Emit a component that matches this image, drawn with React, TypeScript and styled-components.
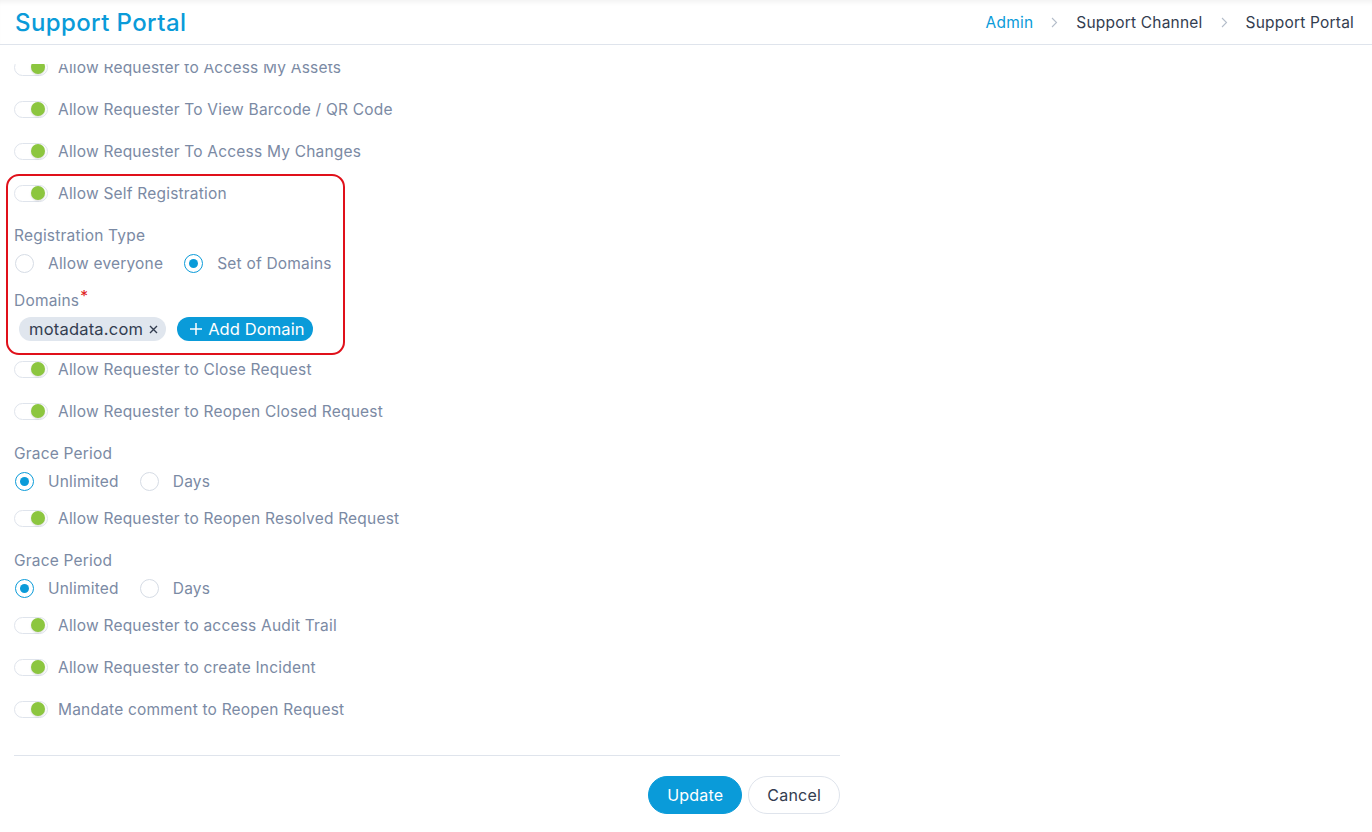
import React, { FunctionComponent, useState } from "react";
import styled, { createGlobalStyle } from "styled-components";

const blue = "#0a9bd9";
const muted = "#7b8aa4";
const dark = "#333d50";
const line = "#dfe4ec";

const GlobalStyle = createGlobalStyle`
  html, body {
    margin: 0;
    padding: 0;
    background: #fff;
  }
  body {
    font-family: Inter, "Open Sans", sans-serif;
    font-size: 15.5px;
    letter-spacing: 0.2px;
    -webkit-font-smoothing: antialiased;
  }
  * {
    box-sizing: border-box;
  }
`;

const Page = styled.div`
  height: 100vh;
  display: flex;
  flex-direction: column;
  overflow: hidden;
`;

const Header = styled.header`
  height: 45px;
  flex: none;
  display: flex;
  align-items: center;
  justify-content: space-between;
  padding: 0 18px 0 15px;
  border-bottom: 1px solid ${line};
  box-shadow: inset 0 5px 5px -3px rgba(0, 0, 0, 0.06);
`;

const Title = styled.h1`
  margin: 0;
  font-size: 24px;
  font-weight: 500;
  letter-spacing: 0.4px;
  color: ${blue};
`;

const Crumbs = styled.nav`
  display: flex;
  align-items: center;
  gap: 18px;
`;

const Crumb = styled.span<{ $link?: boolean }>`
  color: ${(p) => (p.$link ? blue : dark)};
`;

const Body = styled.div`
  flex: 1;
  display: flex;
  flex-direction: column;
  min-height: 0;
  padding-top: 19px;
`;

const Viewport = styled.div`
  flex: 1;
  min-height: 0;
  overflow: hidden;
  padding-left: 14px;
`;

const Form = styled.div`
  width: 826px;
  margin-top: -18px;
  display: flex;
  flex-direction: column;
`;

const Row = styled.div`
  height: 42px;
  display: flex;
  align-items: center;
  gap: 10px;
  color: ${muted};
`;

const Track = styled.span`
  position: relative;
  width: 34px;
  height: 17px;
  border: 1px solid ${line};
  border-radius: 9px;
  background: #fff;
  flex: none;

  &::after {
    content: "";
    position: absolute;
    top: 0;
    right: 2px;
    width: 14px;
    height: 14px;
    border-radius: 50%;
    background: #8cc63f;
    box-shadow: 0 1px 2px rgba(0, 0, 0, 0.15);
  }
`;

const FieldLabel = styled.div`
  padding-top: 11px;
  height: 33px;
  line-height: 22px;
  color: ${muted};
`;

const Required = styled.span`
  position: relative;
  top: -4px;
  margin-left: 1px;
  color: #e02020;
`;

const RadioGroup = styled.div`
  margin: 5px 0;
  height: 22px;
  display: flex;
  align-items: center;
  gap: 20px;
  color: ${muted};
`;

const RadioOption = styled.label`
  display: flex;
  align-items: center;
  gap: 14px;
  margin-left: 1px;
  cursor: pointer;
`;

const RadioDot = styled.span<{ $checked?: boolean }>`
  width: 19px;
  height: 19px;
  border-radius: 50%;
  border: ${(p) => (p.$checked ? `1.5px solid ${blue}` : "1px solid #d6dce5")};
  display: flex;
  align-items: center;
  justify-content: center;

  &::after {
    content: "";
    width: 9px;
    height: 9px;
    border-radius: 50%;
    background: ${(p) => (p.$checked ? blue : "transparent")};
  }
`;

const Highlighted = styled.div`
  position: relative;

  &::before {
    content: "";
    position: absolute;
    top: 2px;
    bottom: -7px;
    left: -8px;
    width: 335px;
    border: 2px solid #e0101a;
    border-radius: 13px;
    pointer-events: none;
  }
`;

const Tags = styled.div`
  margin: 5px 0 7px 5px;
  display: flex;
  align-items: center;
  gap: 11px;
  font-size: 16.5px;
`;

const Tag = styled.span`
  height: 24px;
  display: flex;
  align-items: center;
  gap: 6px;
  padding: 0 8px 0 10px;
  border-radius: 12px;
  background: #e0e6ee;
  color: ${dark};
`;

const AddButton = styled.button`
  height: 24px;
  display: flex;
  align-items: center;
  gap: 5px;
  padding: 0 8px 0 12px;
  border: 0;
  border-radius: 12px;
  background: ${blue};
  color: #fff;
  font: inherit;
  letter-spacing: 0.1px;
  cursor: pointer;
`;

const Footer = styled.div`
  flex: none;
  width: 826px;
  margin: 24px 0 0 14px;
  padding: 20px 0 18px;
  border-top: 1px solid ${line};
  display: flex;
  justify-content: flex-end;
  gap: 6px;
`;

const Button = styled.button<{ $primary?: boolean }>`
  height: 38px;
  padding: 0 18px;
  border-radius: 19px;
  border: 1px solid ${(p) => (p.$primary ? blue : line)};
  background: ${(p) => (p.$primary ? blue : "#fff")};
  color: ${(p) => (p.$primary ? "#fff" : dark)};
  font: inherit;
  font-size: 16px;
  letter-spacing: inherit;
  cursor: pointer;
`;

const Chevron = () => (
  <svg width="7" height="11" viewBox="0 0 7 11" fill="none">
    <path d="M1 1l4.5 4.5L1 10" stroke="#b4bdca" strokeWidth="1.1" />
  </svg>
);

const Toggle: FunctionComponent<{ label: string }> = ({ label }) => (
  <Row>
    <Track />
    {label}
  </Row>
);

const Radios: FunctionComponent<{ options: string[]; initial: number }> = ({
  options,
  initial
}) => {
  const [value, setValue] = useState(initial);
  return (
    <RadioGroup>
      {options.map((o, i) => (
        <RadioOption key={o} onClick={() => setValue(i)}>
          <RadioDot $checked={value === i} />
          {o}
        </RadioOption>
      ))}
    </RadioGroup>
  );
};

const App = () => (
  <Page>
    <GlobalStyle />
    <Header>
      <Title>Support Portal</Title>
      <Crumbs>
        <Crumb $link>Admin</Crumb>
        <Chevron />
        <Crumb>Support Channel</Crumb>
        <Chevron />
        <Crumb>Support Portal</Crumb>
      </Crumbs>
    </Header>
    <Body>
      <Viewport>
        <Form>
          <Toggle label="Allow Requester to Access My Assets" />
          <Toggle label="Allow Requester To View Barcode / QR Code" />
          <Toggle label="Allow Requester To Access My Changes" />
          <Highlighted>
            <Toggle label="Allow Self Registration" />
            <FieldLabel>Registration Type</FieldLabel>
            <Radios options={["Allow everyone", "Set of Domains"]} initial={1} />
            <FieldLabel>
              Domains<Required>*</Required>
            </FieldLabel>
            <Tags>
              <Tag>
                motadata.com
                <svg width="9" height="9" viewBox="0 0 9 9">
                  <path d="M1 1l7 7M8 1L1 8" stroke={dark} strokeWidth="1.4" />
                </svg>
              </Tag>
              <AddButton>
                <svg width="14" height="14" viewBox="0 0 14 14">
                  <path d="M7 1v12M1 7h12" stroke="#fff" strokeWidth="1.5" />
                </svg>
                Add Domain
              </AddButton>
            </Tags>
          </Highlighted>
          <Toggle label="Allow Requester to Close Request" />
          <Toggle label="Allow Requester to Reopen Closed Request" />
          <FieldLabel>Grace Period</FieldLabel>
          <Radios options={["Unlimited", "Days"]} initial={0} />
          <Toggle label="Allow Requester to Reopen Resolved Request" />
          <FieldLabel>Grace Period</FieldLabel>
          <Radios options={["Unlimited", "Days"]} initial={0} />
          <Toggle label="Allow Requester to access Audit Trail" />
          <Toggle label="Allow Requester to create Incident" />
          <Toggle label="Mandate comment to Reopen Request" />
        </Form>
      </Viewport>
      <Footer>
        <Button $primary>Update</Button>
        <Button>Cancel</Button>
      </Footer>
    </Body>
  </Page>
);

export default App;
